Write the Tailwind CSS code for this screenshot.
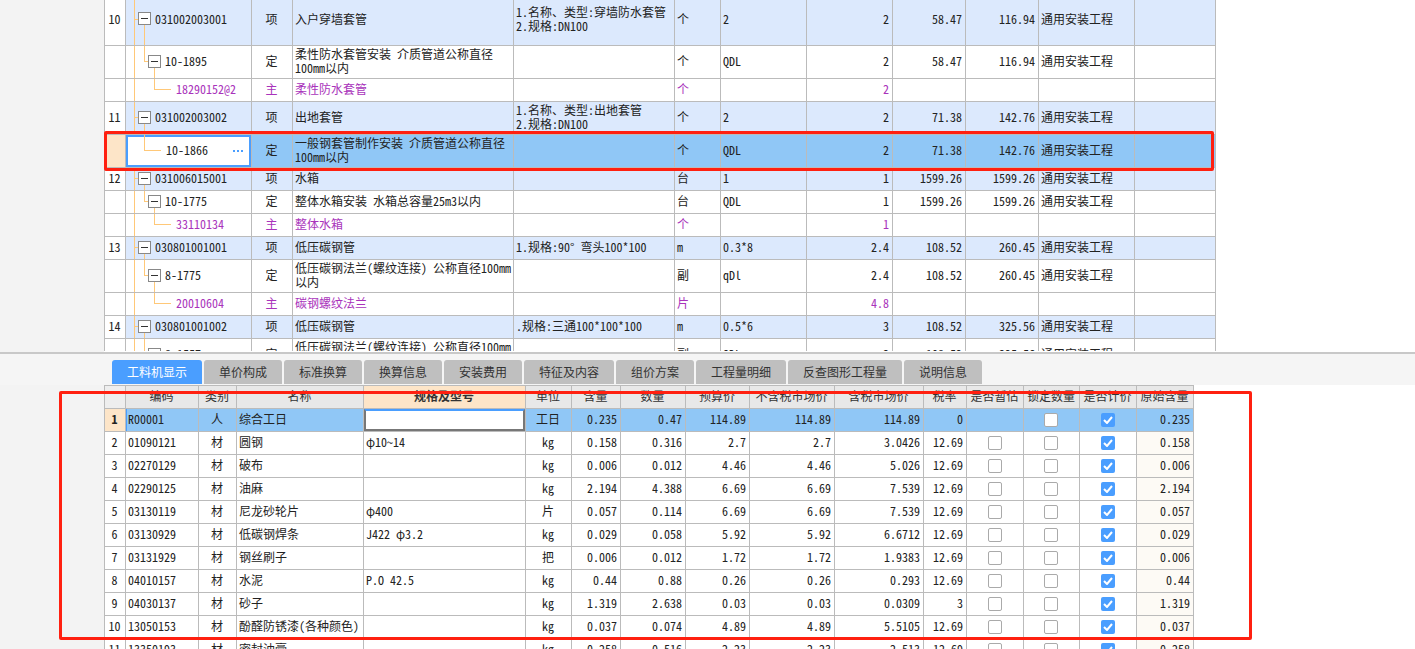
<!DOCTYPE html>
<html lang="zh"><head><meta charset="utf-8"><script src="https://cdn.jsdelivr.net/npm/@tailwindcss/browser@4"></script></head>
<body class="bg-white">
<div class="relative w-[1415px] h-[649px] overflow-hidden bg-white text-[12px] leading-[14px] text-[#222] font-['Noto_Sans_Mono_CJK_SC','Noto_Sans_CJK_SC',monospace]">

<!-- upper grid -->
<div class="flex h-[352px]">
  <div class="w-[104px] bg-[#f3f3f3]"></div>
  <div class="h-[351px] overflow-hidden">
  <table class="table-fixed border-collapse w-[1111px] -mt-[7px] [&_td]:border [&_td]:border-[#bbb] [&_td]:pl-[2px] [&_td]:pr-[3px] [&_td]:pb-[2px] [&_td]:whitespace-nowrap [&_td:nth-child(1)]:text-center [&_td:nth-child(1)]:bg-white [&_td:nth-child(3)]:text-center [&_td:nth-child(8)]:text-right [&_td:nth-child(9)]:text-right [&_td:nth-child(10)]:text-right">
    <colgroup><col class="w-[21px]"><col class="w-[126px]"><col class="w-[41px]"><col class="w-[221px]"><col class="w-[161px]"><col class="w-[46px]"><col class="w-[86px]"><col class="w-[86px]"><col class="w-[73px]"><col class="w-[73px]"><col class="w-[96px]"><col class="w-[81px]"></colgroup>
    <tbody>
    <tr class="h-[52px] bg-[#dce9fd]"><td>10</td>
      <td class="relative"><i class="absolute left-[8px] inset-y-0 w-px bg-[#ffc878]"></i><i class="absolute left-[8px] top-[calc(50%-1px)] w-[4px] h-px bg-[#ffc878]"></i><i class="absolute left-[18px] top-[calc(50%-1px)] bottom-0 w-px bg-[#ffc878]"></i><div class="relative flex items-center ml-[10px]"><b class="flex items-center justify-center w-[13px] h-[13px] border border-[#888] bg-white"><i class="w-[7px] h-px bg-[#333]"></i></b><span class="ml-[4px]">031002003001</span></div></td>
      <td>项</td><td>入户穿墙套管</td><td>1.名称、类型:穿墙防水套管<br>2.规格:DN100</td><td>个</td><td>2</td><td>2</td><td>58.47</td><td>116.94</td><td>通用安装工程</td><td></td></tr>
    <tr class="h-[33px] bg-white"><td></td>
      <td class="relative"><i class="absolute left-[8px] inset-y-0 w-px bg-[#ffc878]"></i><i class="absolute left-[18px] top-0 h-1/2 w-px bg-[#ffc878]"></i><i class="absolute left-[18px] top-[calc(50%-1px)] w-[4px] h-px bg-[#ffc878]"></i><i class="absolute left-[28px] top-[calc(50%-1px)] bottom-0 w-px bg-[#ffc878]"></i><div class="relative flex items-center ml-[20px]"><b class="flex items-center justify-center w-[13px] h-[13px] border border-[#888] bg-white"><i class="w-[7px] h-px bg-[#333]"></i></b><span class="ml-[4px]">10-1895</span></div></td>
      <td>定</td><td>柔性防水套管安装 介质管道公称直径<br>100mm以内</td><td></td><td>个</td><td>QDL</td><td>2</td><td>58.47</td><td>116.94</td><td>通用安装工程</td><td></td></tr>
    <tr class="h-[23px] bg-white text-[#a933bb]"><td></td>
      <td class="relative"><i class="absolute left-[8px] inset-y-0 w-px bg-[#ffc878]"></i><i class="absolute left-[28px] top-0 h-1/2 w-px bg-[#ffc878]"></i><i class="absolute left-[28px] top-[calc(50%-1px)] w-[17px] h-px bg-[#ffc878]"></i><span class="block ml-[48px]">18290152@2</span></td>
      <td>主</td><td>柔性防水套管</td><td></td><td>个</td><td></td><td>2</td><td></td><td></td><td></td><td></td></tr>
    <tr class="h-[33px] bg-[#dce9fd]"><td>11</td>
      <td class="relative"><i class="absolute left-[8px] inset-y-0 w-px bg-[#ffc878]"></i><i class="absolute left-[8px] top-[calc(50%-1px)] w-[4px] h-px bg-[#ffc878]"></i><i class="absolute left-[18px] top-[calc(50%-1px)] bottom-0 w-px bg-[#ffc878]"></i><div class="relative flex items-center ml-[10px]"><b class="flex items-center justify-center w-[13px] h-[13px] border border-[#888] bg-white"><i class="w-[7px] h-px bg-[#333]"></i></b><span class="ml-[4px]">031002003002</span></div></td>
      <td>项</td><td>出地套管</td><td>1.名称、类型:出地套管<br>2.规格:DN100</td><td>个</td><td>2</td><td>2</td><td>71.38</td><td>142.76</td><td>通用安装工程</td><td></td></tr>
    <tr class="h-[33px] bg-[#90c7f6]"><td class="!bg-[#fde5c8]"></td>
      <td class="relative !bg-white"><i class="absolute inset-0 border-2 border-[#4a9eff]"></i><i class="absolute left-[18px] top-0 h-1/2 w-px bg-[#ffc878]"></i><i class="absolute left-[18px] top-[calc(50%-1px)] w-[17px] h-px bg-[#ffc878]"></i><span class="block ml-[38px]">10-1866</span><span class="absolute right-[8px] top-[calc(50%-1px)] flex gap-[2px]"><i class="w-[2px] h-[2px] bg-[#4a9eff]"></i><i class="w-[2px] h-[2px] bg-[#4a9eff]"></i><i class="w-[2px] h-[2px] bg-[#4a9eff]"></i></span></td>
      <td>定</td><td>一般钢套管制作安装 介质管道公称直径<br>100mm以内</td><td></td><td>个</td><td>QDL</td><td>2</td><td>71.38</td><td>142.76</td><td>通用安装工程</td><td></td></tr>
    <tr class="h-[23px] bg-[#dce9fd]"><td>12</td>
      <td class="relative"><i class="absolute left-[8px] inset-y-0 w-px bg-[#ffc878]"></i><i class="absolute left-[8px] top-[calc(50%-1px)] w-[4px] h-px bg-[#ffc878]"></i><i class="absolute left-[18px] top-[calc(50%-1px)] bottom-0 w-px bg-[#ffc878]"></i><div class="relative flex items-center ml-[10px]"><b class="flex items-center justify-center w-[13px] h-[13px] border border-[#888] bg-white"><i class="w-[7px] h-px bg-[#333]"></i></b><span class="ml-[4px]">031006015001</span></div></td>
      <td>项</td><td>水箱</td><td></td><td>台</td><td>1</td><td>1</td><td>1599.26</td><td>1599.26</td><td>通用安装工程</td><td></td></tr>
    <tr class="h-[23px] bg-white"><td></td>
      <td class="relative"><i class="absolute left-[8px] inset-y-0 w-px bg-[#ffc878]"></i><i class="absolute left-[18px] top-0 h-1/2 w-px bg-[#ffc878]"></i><i class="absolute left-[18px] top-[calc(50%-1px)] w-[4px] h-px bg-[#ffc878]"></i><i class="absolute left-[28px] top-[calc(50%-1px)] bottom-0 w-px bg-[#ffc878]"></i><div class="relative flex items-center ml-[20px]"><b class="flex items-center justify-center w-[13px] h-[13px] border border-[#888] bg-white"><i class="w-[7px] h-px bg-[#333]"></i></b><span class="ml-[4px]">10-1775</span></div></td>
      <td>定</td><td>整体水箱安装 水箱总容量25m3以内</td><td></td><td>台</td><td>QDL</td><td>1</td><td>1599.26</td><td>1599.26</td><td>通用安装工程</td><td></td></tr>
    <tr class="h-[23px] bg-white text-[#a933bb]"><td></td>
      <td class="relative"><i class="absolute left-[8px] inset-y-0 w-px bg-[#ffc878]"></i><i class="absolute left-[28px] top-0 h-1/2 w-px bg-[#ffc878]"></i><i class="absolute left-[28px] top-[calc(50%-1px)] w-[17px] h-px bg-[#ffc878]"></i><span class="block ml-[48px]">33110134</span></td>
      <td>主</td><td>整体水箱</td><td></td><td>个</td><td></td><td>1</td><td></td><td></td><td></td><td></td></tr>
    <tr class="h-[23px] bg-[#dce9fd]"><td>13</td>
      <td class="relative"><i class="absolute left-[8px] inset-y-0 w-px bg-[#ffc878]"></i><i class="absolute left-[8px] top-[calc(50%-1px)] w-[4px] h-px bg-[#ffc878]"></i><i class="absolute left-[18px] top-[calc(50%-1px)] bottom-0 w-px bg-[#ffc878]"></i><div class="relative flex items-center ml-[10px]"><b class="flex items-center justify-center w-[13px] h-[13px] border border-[#888] bg-white"><i class="w-[7px] h-px bg-[#333]"></i></b><span class="ml-[4px]">030801001001</span></div></td>
      <td>项</td><td>低压碳钢管</td><td>1.规格:90° 弯头100*100</td><td>m</td><td>0.3*8</td><td>2.4</td><td>108.52</td><td>260.45</td><td>通用安装工程</td><td></td></tr>
    <tr class="h-[33px] bg-white"><td></td>
      <td class="relative"><i class="absolute left-[8px] inset-y-0 w-px bg-[#ffc878]"></i><i class="absolute left-[18px] top-0 h-1/2 w-px bg-[#ffc878]"></i><i class="absolute left-[18px] top-[calc(50%-1px)] w-[4px] h-px bg-[#ffc878]"></i><i class="absolute left-[28px] top-[calc(50%-1px)] bottom-0 w-px bg-[#ffc878]"></i><div class="relative flex items-center ml-[20px]"><b class="flex items-center justify-center w-[13px] h-[13px] border border-[#888] bg-white"><i class="w-[7px] h-px bg-[#333]"></i></b><span class="ml-[4px]">8-1775</span></div></td>
      <td>定</td><td>低压碳钢法兰(螺纹连接) 公称直径100mm<br>以内</td><td></td><td>副</td><td>qDl</td><td>2.4</td><td>108.52</td><td>260.45</td><td>通用安装工程</td><td></td></tr>
    <tr class="h-[23px] bg-white text-[#a933bb]"><td></td>
      <td class="relative"><i class="absolute left-[8px] inset-y-0 w-px bg-[#ffc878]"></i><i class="absolute left-[28px] top-0 h-1/2 w-px bg-[#ffc878]"></i><i class="absolute left-[28px] top-[calc(50%-1px)] w-[17px] h-px bg-[#ffc878]"></i><span class="block ml-[48px]">20010604</span></td>
      <td>主</td><td>碳钢螺纹法兰</td><td></td><td>片</td><td></td><td>4.8</td><td></td><td></td><td></td><td></td></tr>
    <tr class="h-[23px] bg-[#dce9fd]"><td>14</td>
      <td class="relative"><i class="absolute left-[8px] inset-y-0 w-px bg-[#ffc878]"></i><i class="absolute left-[8px] top-[calc(50%-1px)] w-[4px] h-px bg-[#ffc878]"></i><i class="absolute left-[18px] top-[calc(50%-1px)] bottom-0 w-px bg-[#ffc878]"></i><div class="relative flex items-center ml-[10px]"><b class="flex items-center justify-center w-[13px] h-[13px] border border-[#888] bg-white"><i class="w-[7px] h-px bg-[#333]"></i></b><span class="ml-[4px]">030801001002</span></div></td>
      <td>项</td><td>低压碳钢管</td><td>.规格:三通100*100*100</td><td>m</td><td>0.5*6</td><td>3</td><td>108.52</td><td>325.56</td><td>通用安装工程</td><td></td></tr>
    <tr class="h-[33px] bg-white"><td></td>
      <td class="relative"><i class="absolute left-[8px] inset-y-0 w-px bg-[#ffc878]"></i><i class="absolute left-[18px] top-0 h-1/2 w-px bg-[#ffc878]"></i><i class="absolute left-[18px] top-[calc(50%-1px)] w-[4px] h-px bg-[#ffc878]"></i><div class="relative flex items-center ml-[20px]"><b class="flex items-center justify-center w-[13px] h-[13px] border border-[#888] bg-white"><i class="w-[7px] h-px bg-[#333]"></i></b><span class="ml-[4px]">8-1557</span></div></td>
      <td>定</td><td>低压碳钢法兰(螺纹连接) 公称直径100mm<br>以内</td><td></td><td>副</td><td>QDL</td><td>3</td><td>108.52</td><td>325.56</td><td>通用安装工程</td><td></td></tr>
    </tbody>
  </table>
  </div>
</div>

<!-- tab strip -->
<div class="h-[33px] border-t-2 border-[#c8c8c8] bg-[#f5f5f5] pl-[112px] pt-[6px] flex gap-[2px] text-[#333]">
  <div class="h-[24px] w-[90px] flex items-center justify-center rounded-t-[3px] bg-[#4a9eff] text-white font-medium">工料机显示</div>
  <div class="h-[24px] w-[78px] flex items-center justify-center rounded-t-[3px] bg-[#bfbfbf]">单价构成</div>
  <div class="h-[24px] w-[78px] flex items-center justify-center rounded-t-[3px] bg-[#bfbfbf]">标准换算</div>
  <div class="h-[24px] w-[78px] flex items-center justify-center rounded-t-[3px] bg-[#bfbfbf]">换算信息</div>
  <div class="h-[24px] w-[78px] flex items-center justify-center rounded-t-[3px] bg-[#bfbfbf]">安装费用</div>
  <div class="h-[24px] w-[90px] flex items-center justify-center rounded-t-[3px] bg-[#bfbfbf]">特征及内容</div>
  <div class="h-[24px] w-[78px] flex items-center justify-center rounded-t-[3px] bg-[#bfbfbf]">组价方案</div>
  <div class="h-[24px] w-[90px] flex items-center justify-center rounded-t-[3px] bg-[#bfbfbf]">工程量明细</div>
  <div class="h-[24px] w-[114px] flex items-center justify-center rounded-t-[3px] bg-[#bfbfbf]">反查图形工程量</div>
  <div class="h-[24px] w-[78px] flex items-center justify-center rounded-t-[3px] bg-[#bfbfbf]">说明信息</div>
</div>

<!-- lower grid -->
<div class="flex h-[264px]">
  <div class="w-[104px] bg-[#f3f3f3]"></div>
  <div class="h-[264px] overflow-hidden">
  <table class="table-fixed border-collapse w-[1089px] [&_td]:border [&_td]:border-[#bbb] [&_td]:pl-[2px] [&_td]:pr-[3px] [&_td]:pb-[2px] [&_td]:whitespace-nowrap [&_b]:relative [&_b]:top-px [&_td:nth-child(1)]:text-center [&_td:nth-child(3)]:text-center [&_td:nth-child(6)]:text-center [&_td:nth-child(7)]:text-right [&_td:nth-child(8)]:text-right [&_td:nth-child(9)]:text-right [&_td:nth-child(10)]:text-right [&_td:nth-child(11)]:text-right [&_td:nth-child(12)]:text-right [&_td:nth-child(16)]:text-right [&_td:nth-child(16)]:bg-[#fdfaf5] [&_tr]:h-[23px]">
    <colgroup><col class="w-[21px]"><col class="w-[73px]"><col class="w-[38px]"><col class="w-[127px]"><col class="w-[162px]"><col class="w-[46px]"><col class="w-[49px]"><col class="w-[65px]"><col class="w-[64px]"><col class="w-[85px]"><col class="w-[89px]"><col class="w-[43px]"><col class="w-[57px]"><col class="w-[56px]"><col class="w-[57px]"><col class="w-[57px]"></colgroup>
    <tbody>
    <tr class="bg-[#e8e8e8] text-[#333] [&_td]:!text-center [&_td:nth-child(16)]:!bg-[#e8e8e8]"><td class="!bg-[#eee]"></td><td>编码</td><td>类别</td><td>名称</td><td class="!bg-[#fde5c8] font-bold">规格及型号</td><td>单位</td><td>含量</td><td>数量</td><td>预算价</td><td>不含税市场价</td><td>含税市场价</td><td>税率</td><td>是否暂估</td><td>锁定数量</td><td>是否计价</td><td>原始含量</td></tr>
    <tr class="bg-[#90c7f6] [&_td:nth-child(16)]:!bg-[#90c7f6]"><td class="!bg-[#fde5c8] font-bold">1</td><td class="relative"><i class="absolute left-0 inset-y-0 w-[1px] bg-[#4a9eff]"></i>R00001</td><td>人</td><td>综合工日</td><td class="relative !bg-white"><i class="absolute inset-0 border-2 border-[#777] border-t-[#4a9eff]"></i></td><td>工日</td><td>0.235</td><td>0.47</td><td>114.89</td><td>114.89</td><td>114.89</td><td>0</td><td></td>
      <td><b class="block mx-auto w-[14px] h-[14px] rounded-[2px] border border-[#aaa] bg-white"></b></td>
      <td><b class="flex items-center justify-center mx-auto w-[14px] h-[14px] rounded-[2px] bg-[#4a9eff]"><svg width="10" height="8" viewBox="0 0 10 8" fill="none" stroke="#fff" stroke-width="2"><path d="M1 4l3 3 5-6"/></svg></b></td><td>0.235</td></tr>
    <tr><td>2</td><td>01090121</td><td>材</td><td>圆钢</td><td>φ10~14</td><td>kg</td><td>0.158</td><td>0.316</td><td>2.7</td><td>2.7</td><td>3.0426</td><td>12.69</td>
      <td><b class="block mx-auto w-[14px] h-[14px] rounded-[2px] border border-[#aaa] bg-white"></b></td><td><b class="block mx-auto w-[14px] h-[14px] rounded-[2px] border border-[#aaa] bg-white"></b></td>
      <td><b class="flex items-center justify-center mx-auto w-[14px] h-[14px] rounded-[2px] bg-[#4a9eff]"><svg width="10" height="8" viewBox="0 0 10 8" fill="none" stroke="#fff" stroke-width="2"><path d="M1 4l3 3 5-6"/></svg></b></td><td>0.158</td></tr>
    <tr><td>3</td><td>02270129</td><td>材</td><td>破布</td><td></td><td>kg</td><td>0.006</td><td>0.012</td><td>4.46</td><td>4.46</td><td>5.026</td><td>12.69</td>
      <td><b class="block mx-auto w-[14px] h-[14px] rounded-[2px] border border-[#aaa] bg-white"></b></td><td><b class="block mx-auto w-[14px] h-[14px] rounded-[2px] border border-[#aaa] bg-white"></b></td>
      <td><b class="flex items-center justify-center mx-auto w-[14px] h-[14px] rounded-[2px] bg-[#4a9eff]"><svg width="10" height="8" viewBox="0 0 10 8" fill="none" stroke="#fff" stroke-width="2"><path d="M1 4l3 3 5-6"/></svg></b></td><td>0.006</td></tr>
    <tr><td>4</td><td>02290125</td><td>材</td><td>油麻</td><td></td><td>kg</td><td>2.194</td><td>4.388</td><td>6.69</td><td>6.69</td><td>7.539</td><td>12.69</td>
      <td><b class="block mx-auto w-[14px] h-[14px] rounded-[2px] border border-[#aaa] bg-white"></b></td><td><b class="block mx-auto w-[14px] h-[14px] rounded-[2px] border border-[#aaa] bg-white"></b></td>
      <td><b class="flex items-center justify-center mx-auto w-[14px] h-[14px] rounded-[2px] bg-[#4a9eff]"><svg width="10" height="8" viewBox="0 0 10 8" fill="none" stroke="#fff" stroke-width="2"><path d="M1 4l3 3 5-6"/></svg></b></td><td>2.194</td></tr>
    <tr><td>5</td><td>03130119</td><td>材</td><td>尼龙砂轮片</td><td>φ400</td><td>片</td><td>0.057</td><td>0.114</td><td>6.69</td><td>6.69</td><td>7.539</td><td>12.69</td>
      <td><b class="block mx-auto w-[14px] h-[14px] rounded-[2px] border border-[#aaa] bg-white"></b></td><td><b class="block mx-auto w-[14px] h-[14px] rounded-[2px] border border-[#aaa] bg-white"></b></td>
      <td><b class="flex items-center justify-center mx-auto w-[14px] h-[14px] rounded-[2px] bg-[#4a9eff]"><svg width="10" height="8" viewBox="0 0 10 8" fill="none" stroke="#fff" stroke-width="2"><path d="M1 4l3 3 5-6"/></svg></b></td><td>0.057</td></tr>
    <tr><td>6</td><td>03130929</td><td>材</td><td>低碳钢焊条</td><td>J422 φ3.2</td><td>kg</td><td>0.029</td><td>0.058</td><td>5.92</td><td>5.92</td><td>6.6712</td><td>12.69</td>
      <td><b class="block mx-auto w-[14px] h-[14px] rounded-[2px] border border-[#aaa] bg-white"></b></td><td><b class="block mx-auto w-[14px] h-[14px] rounded-[2px] border border-[#aaa] bg-white"></b></td>
      <td><b class="flex items-center justify-center mx-auto w-[14px] h-[14px] rounded-[2px] bg-[#4a9eff]"><svg width="10" height="8" viewBox="0 0 10 8" fill="none" stroke="#fff" stroke-width="2"><path d="M1 4l3 3 5-6"/></svg></b></td><td>0.029</td></tr>
    <tr><td>7</td><td>03131929</td><td>材</td><td>钢丝刷子</td><td></td><td>把</td><td>0.006</td><td>0.012</td><td>1.72</td><td>1.72</td><td>1.9383</td><td>12.69</td>
      <td><b class="block mx-auto w-[14px] h-[14px] rounded-[2px] border border-[#aaa] bg-white"></b></td><td><b class="block mx-auto w-[14px] h-[14px] rounded-[2px] border border-[#aaa] bg-white"></b></td>
      <td><b class="flex items-center justify-center mx-auto w-[14px] h-[14px] rounded-[2px] bg-[#4a9eff]"><svg width="10" height="8" viewBox="0 0 10 8" fill="none" stroke="#fff" stroke-width="2"><path d="M1 4l3 3 5-6"/></svg></b></td><td>0.006</td></tr>
    <tr><td>8</td><td>04010157</td><td>材</td><td>水泥</td><td>P.O 42.5</td><td>kg</td><td>0.44</td><td>0.88</td><td>0.26</td><td>0.26</td><td>0.293</td><td>12.69</td>
      <td><b class="block mx-auto w-[14px] h-[14px] rounded-[2px] border border-[#aaa] bg-white"></b></td><td><b class="block mx-auto w-[14px] h-[14px] rounded-[2px] border border-[#aaa] bg-white"></b></td>
      <td><b class="flex items-center justify-center mx-auto w-[14px] h-[14px] rounded-[2px] bg-[#4a9eff]"><svg width="10" height="8" viewBox="0 0 10 8" fill="none" stroke="#fff" stroke-width="2"><path d="M1 4l3 3 5-6"/></svg></b></td><td>0.44</td></tr>
    <tr><td>9</td><td>04030137</td><td>材</td><td>砂子</td><td></td><td>kg</td><td>1.319</td><td>2.638</td><td>0.03</td><td>0.03</td><td>0.0309</td><td>3</td>
      <td><b class="block mx-auto w-[14px] h-[14px] rounded-[2px] border border-[#aaa] bg-white"></b></td><td><b class="block mx-auto w-[14px] h-[14px] rounded-[2px] border border-[#aaa] bg-white"></b></td>
      <td><b class="flex items-center justify-center mx-auto w-[14px] h-[14px] rounded-[2px] bg-[#4a9eff]"><svg width="10" height="8" viewBox="0 0 10 8" fill="none" stroke="#fff" stroke-width="2"><path d="M1 4l3 3 5-6"/></svg></b></td><td>1.319</td></tr>
    <tr><td>10</td><td>13050153</td><td>材</td><td>酚醛防锈漆(各种颜色)</td><td></td><td>kg</td><td>0.037</td><td>0.074</td><td>4.89</td><td>4.89</td><td>5.5105</td><td>12.69</td>
      <td><b class="block mx-auto w-[14px] h-[14px] rounded-[2px] border border-[#aaa] bg-white"></b></td><td><b class="block mx-auto w-[14px] h-[14px] rounded-[2px] border border-[#aaa] bg-white"></b></td>
      <td><b class="flex items-center justify-center mx-auto w-[14px] h-[14px] rounded-[2px] bg-[#4a9eff]"><svg width="10" height="8" viewBox="0 0 10 8" fill="none" stroke="#fff" stroke-width="2"><path d="M1 4l3 3 5-6"/></svg></b></td><td>0.037</td></tr>
    <tr><td>11</td><td>13350193</td><td>材</td><td>密封油膏</td><td></td><td>kg</td><td>0.258</td><td>0.516</td><td>2.23</td><td>2.23</td><td>2.513</td><td>12.69</td>
      <td><b class="block mx-auto w-[14px] h-[14px] rounded-[2px] border border-[#aaa] bg-white"></b></td><td><b class="block mx-auto w-[14px] h-[14px] rounded-[2px] border border-[#aaa] bg-white"></b></td>
      <td><b class="flex items-center justify-center mx-auto w-[14px] h-[14px] rounded-[2px] bg-[#4a9eff]"><svg width="10" height="8" viewBox="0 0 10 8" fill="none" stroke="#fff" stroke-width="2"><path d="M1 4l3 3 5-6"/></svg></b></td><td>0.258</td></tr>
    </tbody>
  </table>
  </div>
</div>

<!-- red annotation rectangles drawn over the screenshot -->
<div class="absolute left-[104px] top-[131px] w-[1110px] h-[40px] border-[3px] border-[#ff2010] rounded-[2px] pointer-events-none"></div>
<div class="absolute left-[59px] top-[391px] w-[1193px] h-[249px] border-[3px] border-[#ff2010] rounded-[2px] pointer-events-none"></div>
</div>
</body></html>
